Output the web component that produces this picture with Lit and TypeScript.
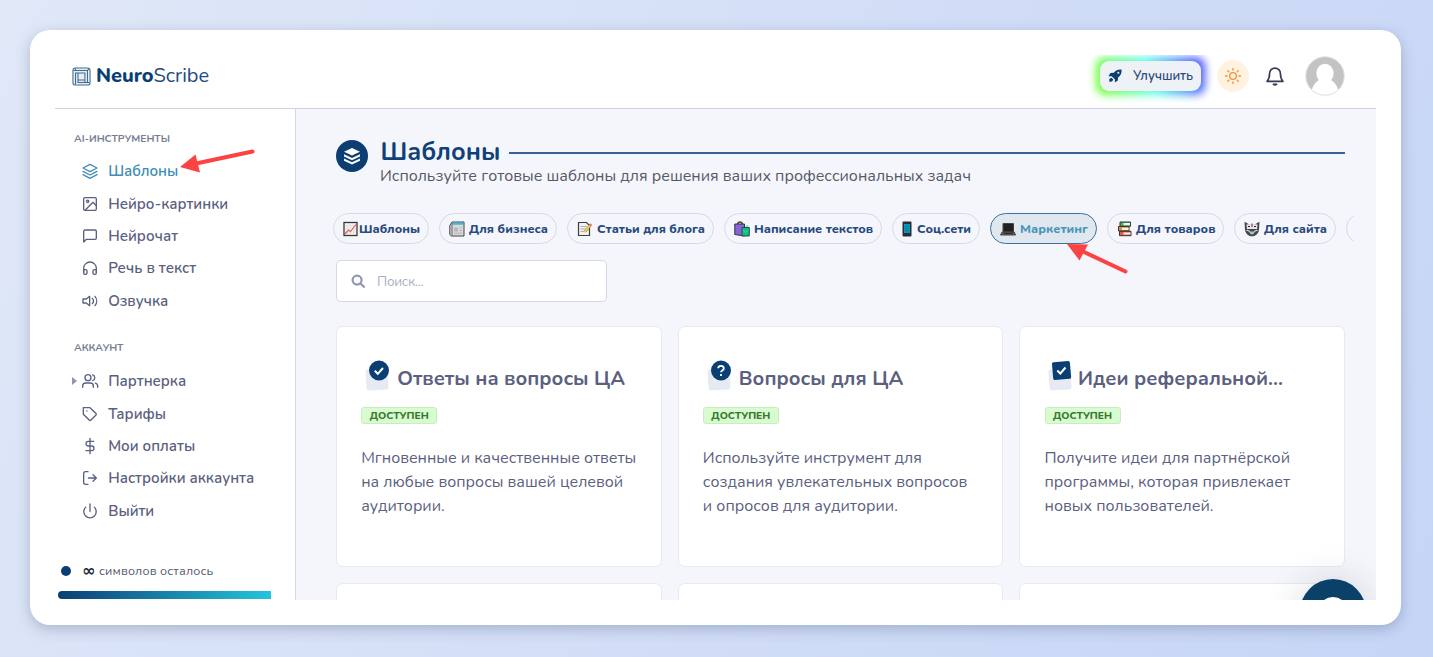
import { LitElement, css, html, svg, nothing } from "lit";
import type { SVGTemplateResult } from "lit";
import { customElement, property } from "lit/decorators.js";
import { classMap } from "lit/directives/class-map.js";

const lineIcons: Record<string, SVGTemplateResult> = {
  layers: svg`<path d="M12 2 1.500 7.500 12 13l10.500-5.500z"/><path d="m1.500 12.500 10.500 5.500 10.500-5.500M1.500 17.500l10.500 5.500 10.500-5.500"/>`,
  image: svg`<rect x="2.500" y="2.500" width="19" height="19" rx="2"/><circle cx="8.500" cy="8" r="1.700"/><path d="m5 21 11.500-11.500 5 5"/>`,
  chat: svg`<path d="M21.500 15a2 2 0 0 1-2 2H6.500l-4 4V5a2 2 0 0 1 2-2h15a2 2 0 0 1 2 2z"/>`,
  headphones: svg`<path d="M2.500 18.500v-6a9.500 9.500 0 0 1 19 0v6"/><path d="M21.500 19.500a2 2 0 0 1-2 2h-1a2 2 0 0 1-2-2v-3a2 2 0 0 1 2-2h3zM2.500 19.500a2 2 0 0 0 2 2h1a2 2 0 0 0 2-2v-3a2 2 0 0 0-2-2h-3z"/>`,
  volume: svg`<path d="M11.500 5 6.500 9H1.500v6h5l5 4z"/><path d="M15.500 8a6 6 0 0 1 0 8M19.500 5a11 11 0 0 1 0 14"/>`,
  users: svg`<path d="M17 21.500v-2a4.500 4.500 0 0 0-4.500-4.500h-7A4.500 4.500 0 0 0 1 19.500v2"/><circle cx="9" cy="7" r="4.500"/><path d="M23.500 21.500v-2a4.500 4.500 0 0 0-3.500-4.300M16 2.700a4.500 4.500 0 0 1 0 8.600"/>`,
  tag: svg`<path d="m21 13.500-7.500 7.500a2 2 0 0 1-2.800 0L2 12.500V2.500h10l9 8.600a2 2 0 0 1 0 2.400z"/><path d="M7.200 7.500h.1"/>`,
  dollar: svg`<path d="M12 .500v23M17.500 5H9.500a3.500 3.500 0 0 0 0 7h5a3.500 3.500 0 0 1 0 7H6"/>`,
  exit: svg`<path d="M9 21.500H5a2.500 2.500 0 0 1-2.500-2.500V5A2.500 2.500 0 0 1 5 2.500h4M16.500 17l5-5-5-5M21.500 12H9.500"/>`,
  power: svg`<path d="M18.400 6.200a9.300 9.300 0 1 1-12.800 0M12 1.500v11"/>`,
  sun: svg`<circle cx="12" cy="12" r="5"/><path d="M12 .800v2.400M12 20.800v2.400M4.100 4.100l1.700 1.700M18.200 18.200l1.700 1.700M.800 12h2.400M20.800 12h2.400M4.100 19.900l1.700-1.700M18.200 5.800l1.700-1.700"/>`,
  bell: svg`<path d="M18.500 9a6.500 6.500 0 0 0-13 0c0 6-3 9.500-3 9.500h19s-3-3.500-3-9.500"/><path d="M10 22h4l-2 .800z"/>`,
};

const chipIcons: Record<string, SVGTemplateResult> = {
  chart: svg`<rect x="1" y="1.500" width="13" height="13" fill="#f3f3f3" stroke="#38383a" stroke-width="1.300"/><path d="M4.300 2v12M7.500 2v12M10.700 2v12M2 5h11M2 8h11M2 11h11" stroke="#d8dadd" stroke-width=".600"/><path d="m2 13 3.500-4 2 1.500L13 3.500" fill="none" stroke="#ec5a4c" stroke-width="1.200"/>`,
  news: svg`<path d="M.800 4.500 3 1h12v14H2.500L.800 13.500z" fill="#d9dadb" stroke="#434346"/><path d="M3.500 1.700h11v2h-11z" fill="#31b7df"/><path d="M3 2v12.500" stroke="#636467"/><path d="M5 6.500h4v4H5z" fill="#b5b7b9"/><path d="M10.500 7H13M10.500 9.500H13M5 12.200h8" stroke="#b2b3b5"/>`,
  memo: svg`<path d="M1.500 1.500h8l3 3v10h-11z" fill="#f1f1ef" stroke="#3d3d3f" stroke-width="1.200"/><path d="M3.500 5.500h6M3.500 8h5M3.500 10.500h4" stroke="#b0b0b0"/><path d="m8 10.500 5.500-6.500" stroke="#55503f" stroke-width="2.600"/><path d="m7.500 11 5.500-6.500" stroke="#f7cf47" stroke-width="2"/><path d="m13 4.500 1.200-1.500" stroke="#df7370" stroke-width="2.200"/>`,
  bags: svg`<path d="M3.500 3.500C4 0 8 0 8.500 3.500" fill="none" stroke="#5b422d" stroke-width="1.500"/><path d="M.800 3h9.700v12L.800 13.500z" fill="#8764d7" stroke="#33323a"/><path d="M8 6.500h7.300V15H8z" fill="#15b889" stroke="#245247"/><path d="M12 6c0-2 2-2 2 0M9.500 9c1 3 3.500 3 4 0" stroke="#37e58d" fill="none"/>`,
  phone: svg`<rect x="3.500" y=".500" width="9" height="15" rx="1" fill="#2c2d30"/><path d="M5 3h6v9H5z" fill="#05a4d7"/><path d="M5 5.300h6M5 7.500h6M5 9.700h6M7 3v9M9 3v9" stroke="#155f7c" stroke-width=".500"/>`,
  laptop: svg`<path d="M3 2.500h10.500V11H3z" fill="#202022" stroke="#444"/><path d="M2.200 11h12L15.500 14H.500z" fill="#67615b" stroke="#444244"/><path d="M3.500 12.300h9.500" stroke="#242424"/>`,
  books: svg`<path d="M3 1h10.500v4.300H3z" fill="#35b565" stroke="#353637"/><path d="M1.500 5.500H12v4.500H1.500z" fill="#f58a35" stroke="#353637"/><path d="M2.500 10.300h11.500v4.400H2.500z" fill="#e05a4a" stroke="#353637"/><path d="M6.500 3.200H13M5 7.800h6.500M6.500 12.500h7" fill="none" stroke="#fbf3e4" stroke-width="2.200"/>`,
  cat: svg`<path d="M.500.800 4.500 3h7l4-2.200L15 9c-1 4.500-4 6.300-7 6.300S2 13.500 1 9z" fill="#45484d"/><path d="m2.500 3.500 3.500-.500h4l3.500.500-.500 4.500H3z" fill="#dce8ed"/><path d="M8 2.500V6" stroke="#e4584e" stroke-width="1.600"/><path d="M4 5.500h2M10 5.500h2" stroke="#23262a" stroke-width="1.200"/><path d="M2.500 9 6 10.500M13.500 9 10 10.500" stroke="#d5e4e6" stroke-width="1.300"/><path d="M5 10.500c1.500 4 4.500 4 6 0z" fill="#a9c3c6"/>`,
};

const cardIcons: Record<string, SVGTemplateResult> = {
  check: svg`<circle cx="15" cy="10.500" r="10" fill="#0b3f74"/><path d="m10.800 10.800 3 3L19 8" fill="none" stroke="#fff" stroke-width="2"/>`,
  question: svg`<circle cx="15" cy="10.500" r="10" fill="#0b3f74"/><path d="M12.200 8.200c.200-3.300 5.600-3.100 5.600.200 0 2-2.800 2-2.800 3.800M15 14v2" fill="none" stroke="#fff" stroke-width="1.800"/>`,
  square: svg`<rect x="5.500" y="1.500" width="18" height="18" rx="1.800" transform="rotate(-5 14.500 10)" fill="#0b3f74"/><path d="m10.300 10.500 3 3L18.500 7.500" fill="none" stroke="#fff" stroke-width="2"/>`,
};

interface NavItem {
  icon: string;
  label: string;
  width: number;
  active?: boolean;
  nested?: boolean;
}

const tools: NavItem[] = [
  { icon: "layers", label: "Шаблоны", width: 70, active: true },
  { icon: "image", label: "Нейро-картинки", width: 120 },
  { icon: "chat", label: "Нейрочат", width: 70 },
  { icon: "headphones", label: "Речь в текст", width: 88 },
  { icon: "volume", label: "Озвучка", width: 60 },
];

const account: NavItem[] = [
  { icon: "users", label: "Партнерка", width: 78, nested: true },
  { icon: "tag", label: "Тарифы", width: 58 },
  { icon: "dollar", label: "Мои оплаты", width: 87 },
  { icon: "exit", label: "Настройки аккаунта", width: 146 },
  { icon: "power", label: "Выйти", width: 46 },
];

const chips = [
  { icon: "chart", label: "Шаблоны", width: 61, tight: true },
  { icon: "news", label: "Для бизнеса", width: 79 },
  { icon: "memo", label: "Статьи для блога", width: 108 },
  { icon: "bags", label: "Написание текстов", width: 119 },
  { icon: "phone", label: "Соц.сети", width: 54, narrow: true },
  { icon: "laptop", label: "Маркетинг", width: 68, active: true },
  { icon: "books", label: "Для товаров", width: 79.5, close: true },
  { icon: "cat", label: "Для сайта", width: 63 },
];

const cards = [
  {
    icon: "check",
    title: "Ответы на вопросы ЦА",
    width: 228,
    lines: [
      ["Мгновенные и качественные ответы", 275],
      ["на любые вопросы вашей целевой", 262],
      ["аудитории.", 83.5],
    ],
  },
  {
    icon: "question",
    title: "Вопросы для ЦА",
    width: 164.5,
    lines: [
      ["Используйте инструмент для", 219],
      ["создания увлекательных вопросов", 264.5],
      ["и опросов для аудитории.", 195],
    ],
  },
  {
    icon: "square",
    title: "Идеи реферальной...",
    width: 205,
    close: true,
    lines: [
      ["Получите идеи для партнёрской", 245.5],
      ["программы, которая привлекает", 245.5],
      ["новых пользователей.", 169],
    ],
  },
] as { icon: string; title: string; width: number; close?: boolean; lines: [string, number][] }[];

// Single line of text, tracked so that it takes up the given width
@customElement("ns-text")
export class NsText extends LitElement {
  @property()
  text = "";

  @property({ type: Number })
  width = 0;

  updated() {
    const span = this.renderRoot.querySelector("span")!;
    span.style.letterSpacing = "0px";
    const natural = span.getBoundingClientRect().width;
    const gap = (this.width - natural) / this.text.length;
    span.style.letterSpacing = `${gap}px`;
  }

  render() {
    return html`<span>${this.text}</span>`;
  }

  static styles = css`
    :host {
      display: block;
      flex: none;
      white-space: nowrap;
    }

    span {
      display: inline-block;
    }
  `;
}

@customElement("ns-icon")
export class NsIcon extends LitElement {
  @property()
  name = "";

  render() {
    return html`<svg viewBox="0 0 24 24">${lineIcons[this.name]}</svg>`;
  }

  static styles = css`
    :host {
      display: block;
      flex: none;
      width: 16px;
      height: 16px;
    }

    svg {
      display: block;
      width: 100%;
      height: 100%;
      overflow: visible;
      fill: none;
      stroke: currentColor;
      stroke-width: 2;
      stroke-linecap: round;
      stroke-linejoin: round;
    }
  `;
}

@customElement("app-root")
export class AppRoot extends LitElement {
  renderHeader() {
    return html`
      <header class="header">
        <svg class="logo" viewBox="0 0 20 20">
          <rect x="1" y="1" width="18" height="18" rx="2.500" />
          <path d="M1.500 3.700h14.800v12.600M3.700 18.500V6.300h9.900v10.400M18.500 16.300H6.300V6.600M16.300 3.700 18 1.800M3.700 13.700V16.300M6.300 13.700h7.300M3.700 1.500v2.200" />
        </svg>
        <div class="brand">
          <ns-text class="strong" text="Neuro" width="57.5"></ns-text>
          <ns-text text="Scribe" width="55.5"></ns-text>
        </div>
        <button class="upgrade">
          <svg viewBox="0 0 16 16">
            <path d="M15.500.500c-4-.300-7 1-9 3.800L2.800 4.600.500 8.400l3.700-.200L8 12l-.300 3.500 3.500-2.500.300-3.300C14.500 7.500 15.800 5 15.500.500zM4 10 1.500 11.500v3.200l3.200-.400L6 12z" />
            <circle cx="11.800" cy="4.300" r="1.200" fill="#eef2f7" />
          </svg>
          <ns-text text="Улучшить" width="60"></ns-text>
        </button>
        <div class="sun"><ns-icon name="sun"></ns-icon></div>
        <ns-icon class="bell" name="bell"></ns-icon>
        <svg class="avatar" viewBox="0 0 40 40">
          <defs>
            <clipPath id="round"><circle cx="20" cy="20" r="19" /></clipPath>
          </defs>
          <circle cx="20" cy="20" r="19" fill="#c3c3c3" />
          <g clip-path="url(#round)" fill="#fff">
            <ellipse cx="20" cy="17.500" rx="8.600" ry="9.800" />
            <path d="M5.500 40C6.500 31 10 26 15 23.500h10C30 26 33.500 31 34.500 40z" />
          </g>
          <circle cx="20" cy="20" r="19.300" fill="none" stroke="#d9dade" stroke-width=".800" />
        </svg>
      </header>
    `;
  }

  renderNav(items: NavItem[]) {
    return html`
      <nav>
        ${items.map(
          (item) => html`
            <a class=${classMap({ item: true, active: !!item.active })}>
              <span class="caret">
                ${item.nested
                  ? html`<svg viewBox="0 0 5 8"><path d="M0 0v8l5-4z" /></svg>`
                  : nothing}
              </span>
              <ns-icon name=${item.icon}></ns-icon>
              <ns-text text=${item.label} width=${item.width}></ns-text>
            </a>
          `
        )}
      </nav>
    `;
  }

  renderSidebar() {
    return html`
      <aside class="sidebar">
        <ns-text class="group" text="AI-ИНСТРУМЕНТЫ" width="96"></ns-text>
        ${this.renderNav(tools)}
        <ns-text class="group second" text="АККАУНТ" width="49.5"></ns-text>
        ${this.renderNav(account)}
        <div class="quota">
          <span class="dot"></span>
          <b>∞</b>
          <ns-text text="символов осталось" width="114.5"></ns-text>
        </div>
        <div class="bar"></div>
      </aside>
    `;
  }

  renderChips() {
    return html`
      <div class="chips">
        ${chips.map(
          (chip) => html`
            <div
              class=${classMap({
                chip: true,
                active: !!chip.active,
                tight: !!chip.tight,
                narrow: !!chip.narrow,
                close: !!chip.close,
              })}
            >
              <svg viewBox="0 0 16 16">${chipIcons[chip.icon]}</svg>
              <ns-text text=${chip.label} width=${chip.width}></ns-text>
            </div>
          `
        )}
        <div class="chip rest"></div>
      </div>
    `;
  }

  renderMain() {
    return html`
      <main class="main">
        <div class="heading">
          <div class="badge">
            <svg viewBox="0 0 18 18">
              <path d="M9 1 1 4.700 9 8.400l8-3.700z" />
              <path d="m1 7.300 8 3.700 8-3.700v2.200L9 13.200 1 9.500zM1 11.500l8 3.700 8-3.700v2.200l-8 3.700-8-3.700z" />
            </svg>
          </div>
          <div class="titles">
            <div class="row">
              <ns-text class="title" text="Шаблоны" width="120"></ns-text>
              <div class="rule"></div>
            </div>
            <ns-text
              class="subtitle"
              text="Используйте готовые шаблоны для решения ваших профессиональных задач"
              width="591"
            ></ns-text>
          </div>
        </div>
        ${this.renderChips()}
        <div class="search">
          <svg viewBox="0 0 16 16">
            <circle cx="6.500" cy="6.500" r="4.800" />
            <path d="m10.200 10.200 4.300 4.300" />
          </svg>
          <ns-text text="Поиск..." width="46"></ns-text>
        </div>
        <div class="grid">
          ${cards.map(
            (card) => html`
              <section class="card">
                <div class=${classMap({ "card-title": true, close: !!card.close })}>
                  <svg viewBox="0 0 26 32">
                    <rect x="2" y="9" width="22" height="21" rx="2.500" transform="rotate(-4 13 20)" fill="#e6ebf3" />
                    ${cardIcons[card.icon]}
                  </svg>
                  <ns-text text=${card.title} width=${card.width}></ns-text>
                </div>
                <div class="status"><ns-text text="ДОСТУПЕН" width="59"></ns-text></div>
                <div class="lines">
                  ${card.lines.map(([text, width]) => html`<ns-text text=${text} width=${width}></ns-text>`)}
                </div>
              </section>
            `
          )}
          ${cards.map(() => html`<section class="card"></section>`)}
        </div>
      </main>
    `;
  }

  render() {
    return html`
      <div class="frame">
        <div class="app">
          ${this.renderHeader()}
          <div class="body">${this.renderSidebar()} ${this.renderMain()}</div>
          <div class="fab"><span></span></div>
        </div>
      </div>
      <svg class="arrows" viewBox="0 0 1433 657">
        <path class="shaft" d="M252.500 151.500 196 163.500M1125.500 271.500 1083 251.500" />
        <path class="head" d="m180 167 15.500-12.500 4.500 18zM1067 244l21 .500-8.500 16z" />
      </svg>
    `;
  }

  static styles = css`
    :host {
      display: block;
      position: relative;
      box-sizing: border-box;
      width: 1433px;
      height: 657px;
      padding: 30px 32px 32px 30px;
      overflow: hidden;
      background: linear-gradient(115deg, #e0e8f8 0%, #c6d5f6 100%);
      font-family: Nunito, Lato, "Noto Sans", sans-serif;
      color: #5b6080;
    }

    * {
      box-sizing: border-box;
    }

    .frame {
      height: 595px;
      padding: 25px;
      border-radius: 20px;
      background: #fff;
      box-shadow: 0 4px 14px rgba(60, 75, 110, 0.3);
    }

    .app {
      position: relative;
      width: 1321px;
      height: 545px;
      overflow: hidden;
      display: flex;
      flex-direction: column;
    }

    .header {
      height: 54px;
      flex: none;
      display: flex;
      align-items: center;
      padding: 0 31px 11px 17px;
      border-bottom: 1px solid #ced3e1;
    }

    .logo {
      width: 19px;
      height: 19px;
      fill: #e5edf3;
      stroke: #416b8e;
      stroke-width: 1.1;
    }

    .brand {
      display: flex;
      margin-left: 5px;
      color: #234b80;
      font-size: 20px;
      line-height: 24px;
    }

    .brand .strong {
      color: #0b3f74;
      font-weight: 800;
    }

    .upgrade {
      position: relative;
      isolation: isolate;
      display: flex;
      align-items: center;
      gap: 11px;
      width: 101px;
      height: 30px;
      margin: 0 16px 0 auto;
      padding: 0 8px;
      border: none;
      background: none;
      color: #2c4c7e;
      font: 600 13px Nunito, Lato, sans-serif;
    }

    .upgrade::before,
    .upgrade::after {
      content: "";
      position: absolute;
      inset: 0;
      z-index: -1;
      border-radius: 9px;
      background: #eef2f7;
    }

    .upgrade::before {
      inset: -4px;
      background: linear-gradient(70deg, #72ff3c 8%, #5cffe8 50%, #4a58ff 92%);
      filter: blur(4px);
    }

    .upgrade svg {
      width: 14px;
      height: 14px;
      fill: #0b3f74;
    }

    .sun {
      display: grid;
      place-items: center;
      width: 32px;
      height: 32px;
      border-radius: 50%;
      background: #fff2e0;
      color: #f59133;
    }

    .bell {
      width: 20px;
      height: 20px;
      margin: 0 20px 0 16px;
      color: #363a52;
    }

    .avatar {
      width: 40px;
      height: 40px;
    }

    .body {
      flex: 1;
      min-height: 0;
      display: flex;
    }

    .sidebar {
      width: 241px;
      flex: none;
      padding-top: 22px;
      border-right: 1px solid #d3d8e6;
    }

    .group {
      margin: 0 0 8.3px 19px;
      color: #777d95;
      font-size: 10.3px;
      font-weight: 700;
      line-height: 16px;
    }

    .group.second {
      margin-top: 23.2px;
      margin-bottom: 9.3px;
    }

    .item {
      display: flex;
      align-items: center;
      height: 32.3px;
      padding-left: 17px;
      color: #5b6080;
      font-size: 15px;
      font-weight: 600;
    }

    .item.active {
      color: #408db5;
    }

    .item ns-text {
      margin-left: 10.2px;
    }

    .caret {
      width: 10px;
    }

    .caret svg {
      display: block;
      width: 5px;
      height: 8px;
      fill: #8e95b3;
    }

    .quota {
      display: flex;
      align-items: center;
      height: 20px;
      margin-top: 34px;
      padding-left: 6px;
      color: #555a70;
      font-size: 12.5px;
    }

    .quota .dot {
      width: 10px;
      height: 10px;
      margin-right: 11px;
      border-radius: 50%;
      background: #0b3f74;
    }

    .quota b {
      width: 17px;
      color: #23283c;
      font: bold 16px/16px "DejaVu Sans", sans-serif;
    }

    .bar {
      width: 213px;
      height: 8px;
      margin: 10px 0 0 3px;
      border-radius: 4px 0 0 4px;
      background: linear-gradient(90deg, #0b3f74, #25c4dc);
    }

    .main {
      flex: 1;
      min-width: 0;
      padding: 28px 31px 0 40px;
      background: #f5f6fb;
    }

    .heading {
      display: flex;
      gap: 12px;
      height: 76px;
    }

    .badge {
      display: grid;
      place-items: center;
      width: 32px;
      height: 32px;
      margin-top: 3px;
      border-radius: 50%;
      background: #0b3f74;
    }

    .badge svg {
      width: 18px;
      height: 18px;
      fill: #fff;
    }

    .titles {
      flex: 1;
    }

    .row {
      display: flex;
      align-items: center;
      gap: 8px;
      height: 30px;
      padding-left: 0.5px;
    }

    .title {
      color: #0f4178;
      font-size: 25px;
      font-weight: 700;
      line-height: 30px;
    }

    .rule {
      flex: 1;
      height: 2px;
      margin-top: 2px;
      background: #3b628e;
    }

    .subtitle {
      color: #545968;
      font-size: 16px;
      line-height: 18px;
    }

    .chips {
      display: flex;
      gap: 10px;
      height: 31px;
      margin: 0 -9px 0 -3px;
      overflow: hidden;
    }

    .chip {
      display: flex;
      align-items: center;
      gap: 4px;
      flex: none;
      height: 31px;
      padding: 0 8px 0 9px;
      border: 1px solid #d6dae6;
      border-radius: 16px;
      color: #284a7e;
      font-size: 12.5px;
      font-weight: 800;
    }

    .chip svg {
      width: 16px;
      height: 16px;
    }

    .chip.tight {
      gap: 0;
    }

    .chip.narrow {
      padding: 0 8px 0 6px;
      gap: 2px;
    }

    .chip.close {
      padding-right: 7.5px;
      gap: 3px;
    }

    .chip.active {
      border-color: #40709d;
      background: #dfe8ee;
      color: #4b94bc;
    }

    .chip.rest {
      width: 100px;
    }

    .search {
      display: flex;
      align-items: center;
      gap: 11px;
      width: 271px;
      height: 42px;
      margin-top: 16px;
      padding: 0 14px;
      border: 1px solid #d3d9e6;
      border-radius: 5px;
      background: #fff;
      color: #a9afc2;
      font-size: 13.5px;
    }

    .search svg {
      width: 15px;
      height: 15px;
      fill: none;
      stroke: #8f97af;
      stroke-width: 2.3;
    }

    .grid {
      display: grid;
      grid-template-columns: repeat(3, 1fr);
      grid-auto-rows: 241px;
      gap: 16px;
      margin-top: 24px;
    }

    .card {
      padding: 33px 24px 0 24.2px;
      border: 1px solid #e7eaf1;
      border-radius: 7px;
      background: #fff;
    }

    .card-title {
      display: flex;
      gap: 7px;
      height: 37px;
      padding-left: 3px;
      font-size: 20px;
      font-weight: 700;
      line-height: 38px;
    }

    .card-title.close {
      gap: 5px;
      padding-left: 2.5px;
    }

    .card-title svg {
      width: 26px;
      height: 32px;
    }

    .status {
      display: flex;
      align-items: center;
      justify-content: center;
      width: 76px;
      height: 17px;
      margin-top: 10px;
      border: 1px solid #c5efbd;
      border-radius: 3px;
      background: #d8fbd0;
      color: #36792e;
      font-size: 10.3px;
      font-weight: 800;
    }

    .lines {
      margin-top: 23.3px;
      font-size: 16px;
      line-height: 23.7px;
    }

    .fab {
      position: absolute;
      left: 1245px;
      top: 524px;
      width: 66px;
      height: 66px;
      border-radius: 50%;
      background: #0b4068;
      box-shadow: 0 0 34px 4px rgba(40, 50, 70, 0.13);
    }

    .fab span {
      display: block;
      width: 30px;
      height: 30px;
      margin: 18px auto;
      border-radius: 50%;
      background: #fff;
    }

    .arrows {
      position: absolute;
      inset: 0;
      width: 1433px;
      height: 657px;
      pointer-events: none;
    }

    .shaft {
      fill: none;
      stroke: #fd4242;
      stroke-width: 4;
      stroke-linecap: round;
    }

    .head {
      fill: #fd4242;
    }
  `;
}

declare global {
  interface HTMLElementTagNameMap {
    "ns-text": NsText;
    "ns-icon": NsIcon;
    "app-root": AppRoot;
  }
}
